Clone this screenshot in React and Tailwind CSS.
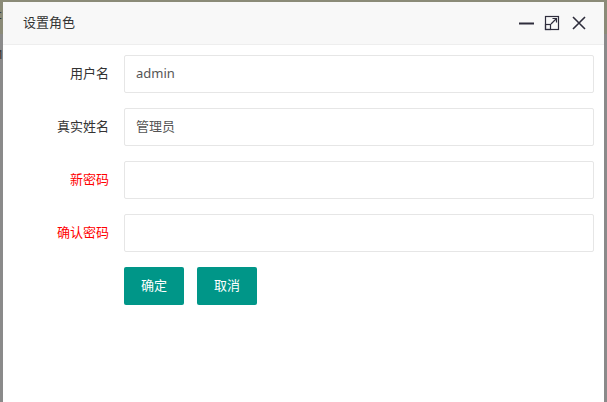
import React from "react";

const font = { fontFamily: '"Noto Sans", "Noto Sans CJK SC", "Microsoft YaHei", sans-serif' };

function Row({ label, red, value }) {
  return (
    <div className="flex items-center mb-[15px]">
      <label className={`w-[106px] text-right text-[13px] ${red ? "text-[#ff0000]" : "text-[#333]"}`}>{label}</label>
      <div className="ml-[15px] w-[470px] h-[38px] border border-[#e6e6e6] rounded-[2px] bg-white flex items-center pl-[11px] text-[13px] text-[#555]">
        {value}
      </div>
    </div>
  );
}

export default function App() {
  return (
    <div className="w-[607px] h-[402px] relative overflow-hidden bg-[#8a8a8a]" style={font}>
      <div className="absolute left-0 top-0 w-[607px] h-[34px] bg-[#8b8b78]" />
      <div className="absolute left-[-4px] top-[6px] text-[12px] text-[#333]">c</div>
      <div className="absolute left-[-3px] top-[46px] text-[12px] text-[#333]">1</div>
      <div className="absolute left-[3px] top-[2px] right-[3px] bottom-0 bg-white flex flex-col">
        <div className="h-[43px] bg-[#f8f8f8] border-b border-[#eee] flex items-center pl-[20px] pr-[17px]">
          <span className="text-[13px] text-[#333]">设置角色</span>
          <div className="ml-auto flex items-center">
            <svg width="16" height="16" viewBox="0 0 16 16" className="mr-[10px]">
              <rect x="1" y="7.5" width="15" height="2" fill="#2e2d3c" />
            </svg>
            <svg width="16" height="16" viewBox="0 0 16 16" className="mr-[11px]">
              <rect x="1.5" y="1.5" width="13" height="13" fill="none" stroke="#2e2d3c" strokeWidth="1.2" />
              <rect x="1.5" y="9.5" width="5" height="5" fill="none" stroke="#2e2d3c" strokeWidth="1.2" />
              <path d="M7 9 L12.5 3.5 M8.5 3.5 H12.5 V7.5" fill="none" stroke="#2e2d3c" strokeWidth="1.2" />
            </svg>
            <svg width="16" height="16" viewBox="0 0 16 16">
              <path d="M2 2 L14 14 M14 2 L2 14" stroke="#2e2d3c" strokeWidth="1.6" />
            </svg>
          </div>
        </div>
        <div className="pt-[10px]">
          <Row label="用户名" value="admin" />
          <Row label="真实姓名" value="管理员" />
          <Row label="新密码" red value="" />
          <Row label="确认密码" red value="" />
          <div className="flex pl-[121px] gap-[13px]">
            <button className="w-[60px] h-[38px] bg-[#009688] text-white text-[13px] rounded-[2px]">确定</button>
            <button className="w-[60px] h-[38px] bg-[#009688] text-white text-[13px] rounded-[2px]">取消</button>
          </div>
        </div>
      </div>
    </div>
  );
}
